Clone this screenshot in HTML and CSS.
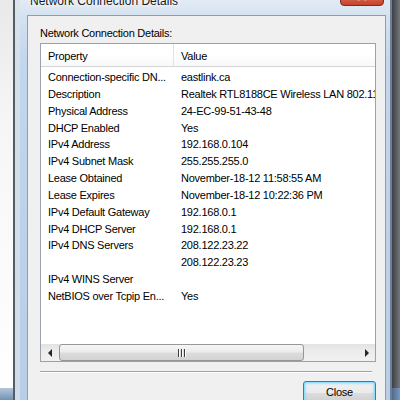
FILE: index.html
```html
<!DOCTYPE html>
<html>
<head>
<meta charset="utf-8">
<link rel="stylesheet" href="styles.css">
</head>
<body>
<div class="screen">
  <div class="desk"><div class="fill"></div><div class="task"></div></div>
  <div class="win">
    <div class="titlebar">
      <span class="title">Network Connection Details</span>
      <span class="xbtn"><svg width="12" height="10" viewBox="0 0 12 10"><path d="M2 1 L10 9 M10 1 L2 9" stroke="#fff" stroke-width="2.2" fill="none"/></svg></span>
    </div>
    <div class="panel">
      <div class="label">Network Connection Details:</div>
      <div class="list">
        <div class="head"><div class="c1">Property</div><div class="c2">Value</div></div>
        <div class="rows">
          <div class="row"><div class="c1">Connection-specific DN...</div><div class="c2">eastlink.ca</div></div>
          <div class="row"><div class="c1">Description</div><div class="c2">Realtek RTL8188CE Wireless LAN 802.11n PCI-E NIC</div></div>
          <div class="row"><div class="c1">Physical Address</div><div class="c2">24-EC-99-51-43-48</div></div>
          <div class="row"><div class="c1">DHCP Enabled</div><div class="c2">Yes</div></div>
          <div class="row"><div class="c1">IPv4 Address</div><div class="c2">192.168.0.104</div></div>
          <div class="row"><div class="c1">IPv4 Subnet Mask</div><div class="c2">255.255.255.0</div></div>
          <div class="row"><div class="c1">Lease Obtained</div><div class="c2">November-18-12 11:58:55 AM</div></div>
          <div class="row"><div class="c1">Lease Expires</div><div class="c2">November-18-12 10:22:36 PM</div></div>
          <div class="row"><div class="c1">IPv4 Default Gateway</div><div class="c2">192.168.0.1</div></div>
          <div class="row"><div class="c1">IPv4 DHCP Server</div><div class="c2">192.168.0.1</div></div>
          <div class="row"><div class="c1">IPv4 DNS Servers</div><div class="c2">208.122.23.22</div></div>
          <div class="row"><div class="c1"></div><div class="c2">208.122.23.23</div></div>
          <div class="row"><div class="c1">IPv4 WINS Server</div><div class="c2"></div></div>
          <div class="row"><div class="c1">NetBIOS over Tcpip En...</div><div class="c2">Yes</div></div>
        </div>
        <div class="spacer"></div>
        <div class="hscroll">
          <div class="arrow"><span class="tri-left"></span></div>
          <div class="track"><div class="thumb"><span class="grip"></span></div></div>
          <div class="arrow"><span class="tri-right"></span></div>
        </div>
      </div>
      <div class="sep"></div>
      <div class="btnrow"><button class="close">Close</button></div>
    </div>
  </div>
  <div class="shade"><div class="fill"></div><div class="task"></div></div>
</div>
</body>
</html>
```
FILE: styles.css
```css
* { box-sizing: border-box; margin: 0; padding: 0; }
body {
  margin: 0;
  width: 400px;
  height: 400px;
  overflow: hidden;
  font-family: "Liberation Sans", Arial, sans-serif;
  font-size: 11px;
  letter-spacing: -0.25px;
  color: #000;
  background: #fff;
}
.screen { display: flex; width: 400px; height: 400px; overflow: hidden; }

.desk {
  width: 13px; flex: none;
  display: flex; flex-direction: column;
  background: linear-gradient(#e9e9e9, #f6f6f6 30%, #ffffff);
}
.fill { flex: 1; }
.desk .task { height: 12px; background: linear-gradient(#b5c6da, #7391b5); }

.win {
  width: 379px; flex: none;
  border-left: 2px solid #545c66;
  border-right: 2px solid #6f8094;
  padding: 0 4px 0 12px;
  background: linear-gradient(#e2ebf5 0, #d5e2f0 16px, #c2d6ec 60px, #b8cee7 100%);
  box-shadow: inset 5px 0 0 rgba(220, 226, 232, 0.7);
  display: flex; flex-direction: column;
}
.titlebar {
  height: 15px; flex: none;
  display: flex; align-items: flex-start;
  padding-left: 3px;
}
.title {
  font-size: 12px; line-height: 16px; letter-spacing: 0;
  margin-top: -7px;
  color: #1a1a1a;
  text-shadow: 0 0 6px #fff, 0 0 3px #fff;
}
.xbtn {
  margin-left: auto; margin-right: 2px;
  margin-top: -14px;
  width: 44px; height: 20px;
  border: 1px solid #7a2b1f;
  border-radius: 0 0 4px 4px;
  background: linear-gradient(#e9a897 0, #dd7560 55%, #cf5039 80%, #c4442e 100%);
  display: flex; align-items: center; justify-content: center;
}

.panel {
  flex: 1;
  background: #f0f0f0;
  border: 1px solid #8e9eb2;
  padding: 9px 9px 0 12px;
}
.label { line-height: 16px; margin-bottom: 2px; }

.list {
  width: 336px; height: 319px;
  border: 1px solid #9ba1a8;
  background: #fff;
  display: flex; flex-direction: column;
}
.head {
  height: 23px; flex: none;
  display: grid; grid-template-columns: 133px 1fr;
  border-bottom: 1px solid #d5d5d5;
  background: linear-gradient(#ffffff, #ffffff 50%, #f7f8f9);
}
.head > div { padding: 3px 0 0 7px; line-height: 19px; }
.head .c1 { border-right: 1px solid #e2e3e4; }
.rows { padding-top: 2px; flex: none; }
.row {
  display: grid; grid-template-columns: 133px 201px;
  height: 16.85px; line-height: 16.85px;
}
.row > div { padding-left: 7px; white-space: nowrap; overflow: hidden; }
.spacer { flex: 1; }

.hscroll {
  height: 17px; flex: none;
  display: flex;
  background: linear-gradient(#e2e2e2, #ebebeb 35%, #f1f1f1);
}
.arrow { width: 17px; flex: none; display: flex; align-items: center; justify-content: center; }
.tri-left { width: 0; height: 0; border-top: 4px solid transparent; border-bottom: 4px solid transparent; border-right: 4px solid #262626; }
.tri-right { width: 0; height: 0; border-top: 4px solid transparent; border-bottom: 4px solid transparent; border-left: 4px solid #262626; }
.track { flex: 1; display: flex; }
.thumb {
  margin-left: 1px; width: 245px;
  border: 1px solid #979797; border-radius: 3px;
  background: linear-gradient(#f6f6f6, #ececec 45%, #dcdcdc 55%, #d2d2d2);
  display: flex; align-items: center; justify-content: center;
}
.grip {
  width: 8px; height: 8px;
  background: repeating-linear-gradient(90deg, #3c3c3c 0 1px, #ffffff 1px 2px, #d9d9d9 2px 3px);
}

.sep {
  margin: 9px 4px 0 0;
  height: 2px;
  border-top: 1px solid #a2a2a2;
  border-bottom: 1px solid #ffffff;
}
.btnrow { display: flex; justify-content: flex-end; margin-top: 8px; }
.close {
  width: 73px; height: 23px;
  font: inherit; letter-spacing: inherit; color: #000;
  line-height: 21px;
  border: 1px solid #2f7fb8; border-radius: 3px;
  background: linear-gradient(#f2f2f2 0, #ebebeb 50%, #dddddd 50%, #cfcfcf 100%);
  box-shadow: inset 0 0 0 1px #8fdcfb, inset 0 0 2px 2px rgba(120, 210, 250, 0.5);
}

.shade {
  width: 8px; flex: none;
  display: flex; flex-direction: column;
  background: linear-gradient(to right, #3d4044, #5c5f63 60%, #75787c);
}
.shade .task { height: 12px; background: linear-gradient(to right, #4d6a8e, #7a98bd); }
```
